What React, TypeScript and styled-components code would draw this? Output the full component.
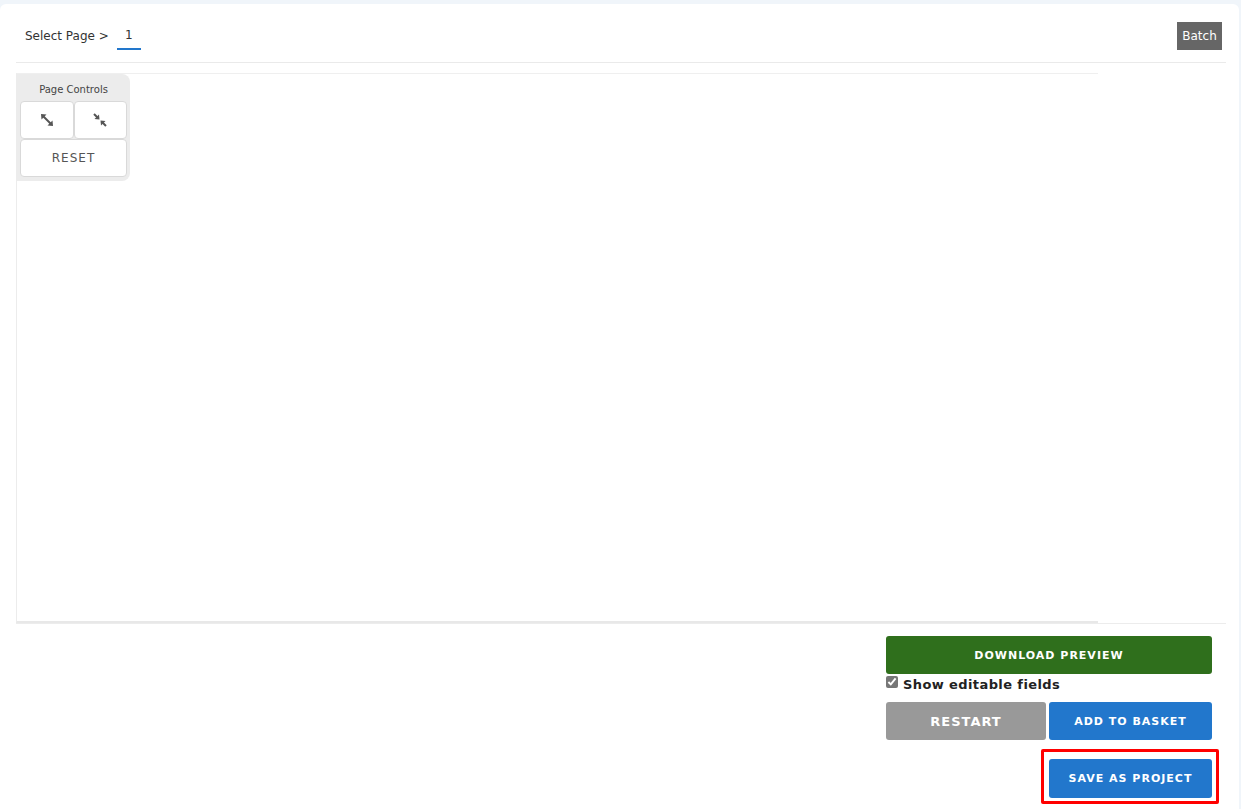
import React, { useState } from 'react';
import styled, { createGlobalStyle } from 'styled-components';

const GlobalStyle = createGlobalStyle`
  html, body {
    margin: 0;
    padding: 0;
    background: #f0f5fa;
  }
  body {
    font-family: "DejaVu Sans", Verdana, sans-serif;
  }
`;

const Page = styled.div`
  padding-top: 4px;
  min-height: 805px;
`;

const Panel = styled.div`
  background: #ffffff;
  border-top-left-radius: 6px;
  border-top-right-radius: 6px;
  margin-right: 2px;
  min-height: 805px;
  padding: 4px 13px 0 16px;
  box-sizing: border-box;
`;

const Header = styled.div`
  height: 54px;
  display: flex;
  align-items: center;
  justify-content: space-between;
  border-bottom: 1px solid #eaeaea;
  padding: 0 4px 0 9px;
`;

const PageSelect = styled.div`
  display: flex;
  align-items: center;
  font-size: 12px;
  color: #333;
  padding-top: 2px;
`;

const PageNumber = styled.span`
  display: inline-block;
  margin-left: 8px;
  width: 24px;
  text-align: center;
  font-size: 12px;
  color: #333;
  padding-bottom: 6px;
  margin-top: 6px;
  border-bottom: 2px solid #2277cc;
`;

const BatchButton = styled.button`
  background: #666666;
  color: #ffffff;
  border: none;
  border-radius: 0;
  height: 28px;
  width: 45px;
  padding: 0;
  margin-top: 2px;
  font-family: "DejaVu Sans", Verdana, sans-serif;
  font-size: 12px;
  cursor: pointer;
`;

const Stage = styled.div`
  margin-top: 10px;
  height: 550px;
  border-bottom: 1px solid #ececec;
  display: flex;
`;

const Canvas = styled.div`
  position: relative;
  width: 1082px;
  border-top: 1px solid #efefef;
  border-left: 1px solid #ececec;
  border-bottom: 2px solid #e8e8e8;
  box-sizing: border-box;
`;

const Controls = styled.div`
  position: absolute;
  top: 0;
  left: 0;
  width: 113px;
  background: #ececec;
  border-bottom-right-radius: 8px;
  border-top-right-radius: 8px;
  padding: 10px 3px 4px 3px;
  box-sizing: border-box;
`;

const ControlsTitle = styled.div`
  font-size: 10px;
  line-height: 11px;
  color: #444;
  text-align: center;
  margin-bottom: 6px;
`;

const ControlGrid = styled.div`
  display: grid;
  grid-template-columns: 1fr 1fr;
`;

const ControlButton = styled.button<{ $wide?: boolean }>`
  grid-column: ${(p) => (p.$wide ? 'span 2' : 'auto')};
  height: 38px;
  background: #ffffff;
  border: 1px solid #d9d9d9;
  border-radius: 4px;
  display: flex;
  align-items: center;
  justify-content: center;
  padding: 0;
  font-family: "DejaVu Sans", Verdana, sans-serif;
  font-size: 12px;
  letter-spacing: 1px;
  color: #555;
  cursor: pointer;
`;

const Footer = styled.div`
  display: flex;
  justify-content: flex-end;
  padding-right: 14px;
`;

const Actions = styled.div`
  width: 326px;
  padding-top: 12px;
  display: flex;
  flex-direction: column;
`;

const ActionButton = styled.button<{ $tone: 'green' | 'gray' | 'blue' }>`
  height: 38px;
  border: none;
  border-radius: 3px;
  background: ${(p) => (p.$tone === 'green' ? '#2f6f1c' : p.$tone === 'gray' ? '#999999' : '#2277cc')};
  color: #ffffff;
  font-family: "DejaVu Sans", Verdana, sans-serif;
  font-weight: bold;
  font-size: ${(p) => (p.$tone === 'gray' ? '13px' : '11px')};
  letter-spacing: 1px;
  cursor: pointer;
  padding: 0;
`;

const CheckRow = styled.label`
  display: flex;
  align-items: flex-start;
  height: 28px;
  padding-top: 2px;
  box-sizing: border-box;
  font-size: 13px;
  line-height: 17px;
  font-weight: bold;
  color: #222;
  letter-spacing: 0.4px;
  input {
    margin: 0 5px 0 0;
    width: 12px;
    height: 12px;
    accent-color: #777;
  }
`;

const ButtonRow = styled.div`
  display: grid;
  grid-template-columns: 160px 163px;
  gap: 3px;
`;

const SaveRow = styled.div`
  display: flex;
  justify-content: flex-end;
  margin-top: 9px;
  margin-right: -7px;
`;

const Highlight = styled.div`
  border: 3px solid #ff0000;
  border-radius: 2px;
  padding: 7px 4px 3px 5px;
  display: flex;
`;

const SaveButton = styled(ActionButton)`
  width: 163px;
  height: 39px;
`;

const ExpandIcon = () => (
  <svg width="16" height="16" viewBox="0 0 16 16">
    <path d="M4 4 L12 12" stroke="#555" strokeWidth="2" />
    <path d="M2 2 L7.5 2.5 L2.5 7.5 Z" fill="#555" />
    <path d="M14 14 L8.5 13.5 L13.5 8.5 Z" fill="#555" />
  </svg>
);

const CompressIcon = () => (
  <svg width="16" height="16" viewBox="0 0 16 16">
    <path d="M2 2 L6 6 M10 10 L14 14" stroke="#555" strokeWidth="2" />
    <path d="M7.5 7.5 L2.5 7 L7 2.5 Z" fill="#555" />
    <path d="M8.5 8.5 L13.5 9 L9 13.5 Z" fill="#555" />
  </svg>
);

export default function App() {
  const [showFields, setShowFields] = useState(true);

  return (
    <>
      <GlobalStyle />
      <Page>
        <Panel>
          <Header>
            <PageSelect>
              Select Page &gt;
              <PageNumber>1</PageNumber>
            </PageSelect>
            <BatchButton>Batch</BatchButton>
          </Header>

          <Stage>
            <Canvas>
              <Controls>
                <ControlsTitle>Page Controls</ControlsTitle>
                <ControlGrid>
                  <ControlButton aria-label="Zoom in">
                    <ExpandIcon />
                  </ControlButton>
                  <ControlButton aria-label="Zoom out">
                    <CompressIcon />
                  </ControlButton>
                  <ControlButton $wide>RESET</ControlButton>
                </ControlGrid>
              </Controls>
            </Canvas>
          </Stage>

          <Footer>
            <Actions>
              <ActionButton $tone="green">DOWNLOAD PREVIEW</ActionButton>
              <CheckRow>
                <input
                  type="checkbox"
                  checked={showFields}
                  onChange={(e) => setShowFields(e.target.checked)}
                />
                Show editable fields
              </CheckRow>
              <ButtonRow>
                <ActionButton $tone="gray">RESTART</ActionButton>
                <ActionButton $tone="blue">ADD TO BASKET</ActionButton>
              </ButtonRow>
              <SaveRow>
                <Highlight>
                  <SaveButton $tone="blue">SAVE AS PROJECT</SaveButton>
                </Highlight>
              </SaveRow>
            </Actions>
          </Footer>
        </Panel>
      </Page>
    </>
  );
}
